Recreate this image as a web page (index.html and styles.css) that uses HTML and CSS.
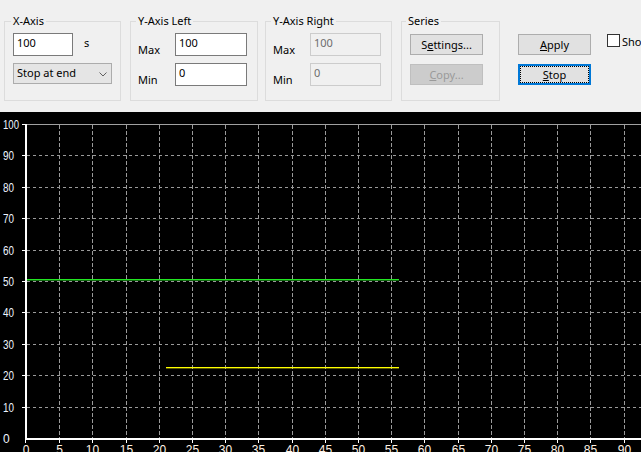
FILE: index.html
```html
<!DOCTYPE html>
<html>
<head>
<meta charset="utf-8">
<link rel="stylesheet" href="styles.css">
</head>
<body>
<div class="panel">
  <div class="group g-x">
    <span class="legend">X-Axis</span>
    <div class="row r-first">
      <div class="tb w60">100</div>
      <span class="unit">s</span>
    </div>
    <div class="select">
      <span>Stop at end</span>
      <svg class="chev" width="8" height="5" viewBox="0 0 8 5"><path d="M0.5 0.5 L4 4 L7.5 0.5" fill="none" stroke="#606060" stroke-width="1"/></svg>
    </div>
  </div>

  <div class="group g-yl">
    <span class="legend">Y-Axis Left</span>
    <div class="row r-first">
      <span class="lbl">Max</span>
      <div class="tb w72">100</div>
    </div>
    <div class="row r-second">
      <span class="lbl">Min</span>
      <div class="tb w72">0</div>
    </div>
  </div>

  <div class="group g-yr">
    <span class="legend">Y-Axis Right</span>
    <div class="row r-first">
      <span class="lbl">Max</span>
      <div class="tb w71 dis">100</div>
    </div>
    <div class="row r-second">
      <span class="lbl">Min</span>
      <div class="tb w71 dis">0</div>
    </div>
  </div>

  <div class="group g-s">
    <span class="legend">Series</span>
    <div class="btn b-first">S<u>e</u>ttings...</div>
    <div class="btn b-second dis"><u>C</u>opy...</div>
  </div>

  <div class="actions">
    <div class="btn"><u>A</u>pply</div>
    <div class="btn b-second focus"><span class="focus-in"><u>S</u>top</span></div>
  </div>

  <div class="check">
    <span class="box"></span>
    <span class="check-lbl">Show</span>
  </div>
</div>

<div class="chart">
  <svg width="641" height="340" viewBox="0 0 641 340">
    <g transform="translate(0,-112)">
      <rect x="0" y="112" width="641" height="340" fill="#000"/>
      <g class="hgrid" stroke="#9a9a9a" stroke-width="1" stroke-dasharray="3 3" fill="none">
        <line x1="27" y1="407.5" x2="641" y2="407.5"/>
        <line x1="27" y1="375.5" x2="641" y2="375.5"/>
        <line x1="27" y1="344.5" x2="641" y2="344.5"/>
        <line x1="27" y1="312.5" x2="641" y2="312.5"/>
        <line x1="27" y1="281.5" x2="641" y2="281.5"/>
        <line x1="27" y1="250.5" x2="641" y2="250.5"/>
        <line x1="27" y1="218.5" x2="641" y2="218.5"/>
        <line x1="27" y1="187.5" x2="641" y2="187.5"/>
        <line x1="27" y1="155.5" x2="641" y2="155.5"/>
      </g>
      <g class="vgrid" stroke="#9a9a9a" stroke-width="1" stroke-dasharray="4 2" fill="none">
        <line x1="59.5" y1="125" x2="59.5" y2="438"/>
        <line x1="92.5" y1="125" x2="92.5" y2="438"/>
        <line x1="126.5" y1="125" x2="126.5" y2="438"/>
        <line x1="159.5" y1="125" x2="159.5" y2="438"/>
        <line x1="192.5" y1="125" x2="192.5" y2="438"/>
        <line x1="225.5" y1="125" x2="225.5" y2="438"/>
        <line x1="258.5" y1="125" x2="258.5" y2="438"/>
        <line x1="292.5" y1="125" x2="292.5" y2="438"/>
        <line x1="325.5" y1="125" x2="325.5" y2="438"/>
        <line x1="358.5" y1="125" x2="358.5" y2="438"/>
        <line x1="391.5" y1="125" x2="391.5" y2="438"/>
        <line x1="424.5" y1="125" x2="424.5" y2="438"/>
        <line x1="458.5" y1="125" x2="458.5" y2="438"/>
        <line x1="491.5" y1="125" x2="491.5" y2="438"/>
        <line x1="524.5" y1="125" x2="524.5" y2="438"/>
        <line x1="557.5" y1="125" x2="557.5" y2="438"/>
        <line x1="590.5" y1="125" x2="590.5" y2="438"/>
        <line x1="624.5" y1="125" x2="624.5" y2="438"/>
      </g>
      <line x1="27" y1="124.5" x2="641" y2="124.5" stroke="#a0a0a0" stroke-width="1"/>

      <rect x="27" y="279" width="372" height="1" fill="#22e622"/>
      <rect x="27" y="280" width="372" height="1" fill="#22e622" fill-opacity="0.45"/>
      <rect x="166" y="367" width="233" height="1" fill="#ffff00"/>
      <rect x="166" y="368" width="233" height="1" fill="#ffff00" fill-opacity="0.35"/>

      <rect x="25" y="124" width="2" height="316" fill="#fff"/>
      <rect x="25" y="438" width="616" height="2" fill="#fff"/>

      <g fill="#fff">
        <rect x="22" y="124" width="3" height="1"/>
        <rect x="22" y="155" width="3" height="1"/>
        <rect x="22" y="187" width="3" height="1"/>
        <rect x="22" y="218" width="3" height="1"/>
        <rect x="22" y="250" width="3" height="1"/>
        <rect x="22" y="281" width="3" height="1"/>
        <rect x="22" y="312" width="3" height="1"/>
        <rect x="22" y="344" width="3" height="1"/>
        <rect x="22" y="375" width="3" height="1"/>
        <rect x="22" y="407" width="3" height="1"/>
        <rect x="25" y="440" width="1" height="3"/>
        <rect x="59" y="440" width="1" height="3"/>
        <rect x="92" y="440" width="1" height="3"/>
        <rect x="126" y="440" width="1" height="3"/>
        <rect x="159" y="440" width="1" height="3"/>
        <rect x="192" y="440" width="1" height="3"/>
        <rect x="225" y="440" width="1" height="3"/>
        <rect x="258" y="440" width="1" height="3"/>
        <rect x="292" y="440" width="1" height="3"/>
        <rect x="325" y="440" width="1" height="3"/>
        <rect x="358" y="440" width="1" height="3"/>
        <rect x="391" y="440" width="1" height="3"/>
        <rect x="424" y="440" width="1" height="3"/>
        <rect x="458" y="440" width="1" height="3"/>
        <rect x="491" y="440" width="1" height="3"/>
        <rect x="524" y="440" width="1" height="3"/>
        <rect x="557" y="440" width="1" height="3"/>
        <rect x="590" y="440" width="1" height="3"/>
        <rect x="624" y="440" width="1" height="3"/>
      </g>

      <g class="ylab">
        <text x="3" y="128.5" textLength="16" lengthAdjust="spacingAndGlyphs">100</text>
        <text x="3" y="159.5" textLength="11" lengthAdjust="spacingAndGlyphs">90</text>
        <text x="3" y="191.5" textLength="11" lengthAdjust="spacingAndGlyphs">80</text>
        <text x="3" y="222.5" textLength="11" lengthAdjust="spacingAndGlyphs">70</text>
        <text x="3" y="254.5" textLength="11" lengthAdjust="spacingAndGlyphs">60</text>
        <text x="3" y="285.5" textLength="11" lengthAdjust="spacingAndGlyphs">50</text>
        <text x="3" y="316.5" textLength="11" lengthAdjust="spacingAndGlyphs">40</text>
        <text x="3" y="348.5" textLength="11" lengthAdjust="spacingAndGlyphs">30</text>
        <text x="3" y="379.5" textLength="11" lengthAdjust="spacingAndGlyphs">20</text>
        <text x="3" y="411.5" textLength="11" lengthAdjust="spacingAndGlyphs">10</text>
        <text x="3" y="443">0</text>
      </g>
      <g class="xlab" text-anchor="middle">
        <text x="26" y="454">0</text>
        <text x="59.5" y="454">5</text>
        <text x="92.5" y="454">10</text>
        <text x="126.5" y="454">15</text>
        <text x="159.5" y="454">20</text>
        <text x="192.5" y="454">25</text>
        <text x="225.5" y="454">30</text>
        <text x="258.5" y="454">35</text>
        <text x="292.5" y="454">40</text>
        <text x="325.5" y="454">45</text>
        <text x="358.5" y="454">50</text>
        <text x="391.5" y="454">55</text>
        <text x="424.5" y="454">60</text>
        <text x="458.5" y="454">65</text>
        <text x="491.5" y="454">70</text>
        <text x="524.5" y="454">75</text>
        <text x="557.5" y="454">80</text>
        <text x="590.5" y="454">85</text>
        <text x="624.5" y="454">90</text>
      </g>
    </g>
  </svg>
</div>
</body>
</html>
```

FILE: styles.css
```css
* { box-sizing: border-box; }
html, body { margin: 0; padding: 0; }
body {
  width: 641px;
  height: 452px;
  overflow: hidden;
  background: #f0f0f0;
  font-family: "Noto Sans", "Open Sans", sans-serif;
  font-size: 11px;
  line-height: 15px;
  color: #000;
}

.panel {
  height: 112px;
  display: flex;
  align-items: flex-start;
  padding: 21px 0 0 4px;
  overflow: hidden;
  white-space: nowrap;
}

.group {
  flex-shrink: 0;
  height: 80px;
  border: 1px solid #dcdcdc;
  display: flex;
  flex-direction: column;
  align-items: flex-start;
}
.g-x  { width: 117px; padding-left: 8px; }
.g-yl { width: 128px; padding-left: 7px; margin-left: 9px; }
.g-yr { width: 127px; padding-left: 7px; margin-left: 7px; }
.g-s  { width: 99px;  padding-left: 8px; margin-left: 9px; }

.legend {
  margin-top: -9px;
  margin-left: -2px;
  padding: 0 2px;
  height: 15px;
  background: #f0f0f0;
}
.g-s .legend { margin-left: -4px; }

.row { display: flex; align-items: flex-end; }
.r-first { margin-top: 5px; }
.r-second { margin-top: 7px; }
.g-x .row { align-items: flex-start; }

.tb {
  height: 23px;
  border: 1px solid #7a7a7a;
  background: #fff;
  padding: 1px 0 0 3px;
}
.w60 { width: 60px; }
.w72 { width: 72px; }
.w71 { width: 71px; }
.tb.dis {
  background: #f0f0f0;
  border-color: #cccccc;
  color: #6d6d6d;
}

.unit { margin: 2px 0 0 11px; }

.lbl { width: 37px; margin-bottom: -1px; height: 15px; }

.select {
  margin-top: 7px;
  width: 99px;
  height: 21px;
  background: #e5e5e5;
  border: 1px solid #acacac;
  padding: 1px 4px 0 3px;
  display: flex;
  justify-content: space-between;
  align-items: flex-start;
}
.chev { margin-top: 7px; display: block; }

.btn {
  width: 73px;
  height: 21px;
  border: 1px solid #adadad;
  background: #e1e1e1;
  text-align: center;
  line-height: 19px;
  flex-shrink: 0;
}
.b-first { margin-top: 6px; }
.b-second { margin-top: 9px; }
.btn.dis {
  background: #cccccc;
  border-color: #bfbfbf;
  color: #9a9a9a;
}
.btn.focus {
  border: 2px solid #0078d7;
  display: flex;
  line-height: 15px;
}
.focus-in {
  flex: 1;
  border: 1px dotted #000;
  line-height: 13px;
  padding-top: 1px;
}

.actions {
  flex-shrink: 0;
  margin: 13px 0 0 18px;
  display: flex;
  flex-direction: column;
}

.check {
  flex-shrink: 0;
  margin: 13px 0 0 16px;
  display: flex;
  align-items: flex-start;
}
.box {
  width: 13px;
  height: 13px;
  border: 1px solid #333;
  background: #fff;
}
.check-lbl { margin-left: 2px; margin-top: 0; }

.chart { height: 340px; background: #000; }
.chart svg { display: block; }
.ylab text { font-family: "Liberation Sans", Arial, sans-serif; font-size: 12px; fill: #eef4ff; }
.xlab text { font-family: "Liberation Sans", Arial, sans-serif; font-size: 12px; fill: #fff2e4; }
```
